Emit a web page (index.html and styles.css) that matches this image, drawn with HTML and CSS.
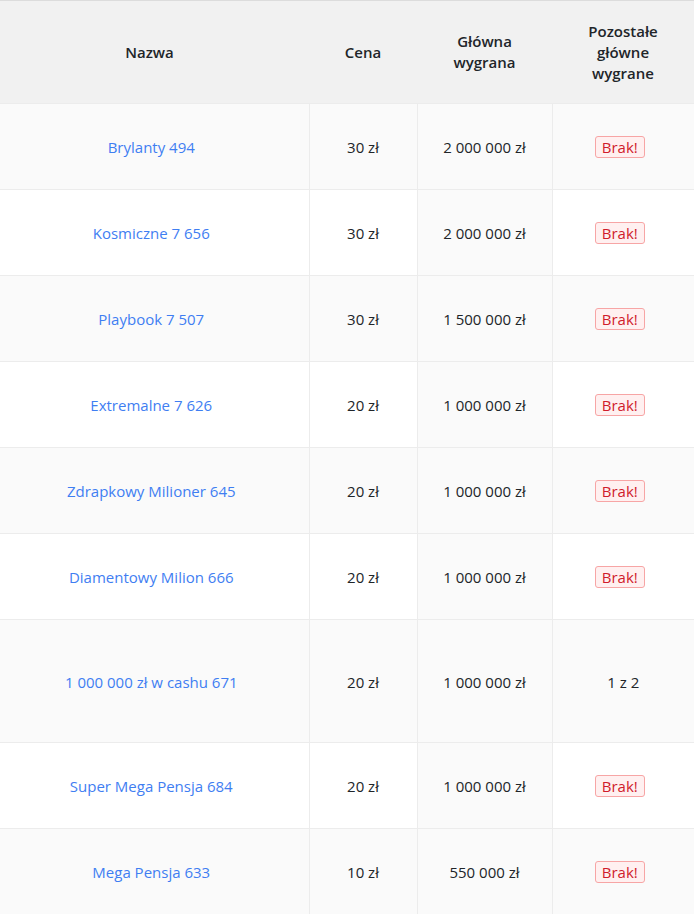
FILE: index.html
```html
<!DOCTYPE html>
<html lang="pl">
<head>
<meta charset="utf-8">
<link rel="stylesheet" href="styles.css">
</head>
<body>
<table class="tbl">
  <colgroup>
    <col class="c-name">
    <col class="c-price">
    <col class="c-prize">
    <col class="c-left">
  </colgroup>
  <thead>
    <tr>
      <th>Nazwa</th>
      <th>Cena</th>
      <th>Główna<br>wygrana</th>
      <th>Pozostałe<br>główne<br>wygrane</th>
    </tr>
  </thead>
  <tbody>
    <tr><td><a href="#">Brylanty 494</a></td><td>30 zł</td><td class="hl">2 000 000 zł</td><td><span class="badge">Brak!</span></td></tr>
    <tr><td><a href="#">Kosmiczne 7 656</a></td><td>30 zł</td><td class="hl">2 000 000 zł</td><td><span class="badge">Brak!</span></td></tr>
    <tr><td><a href="#">Playbook 7 507</a></td><td>30 zł</td><td class="hl">1 500 000 zł</td><td><span class="badge">Brak!</span></td></tr>
    <tr><td><a href="#">Extremalne 7 626</a></td><td>20 zł</td><td class="hl">1 000 000 zł</td><td><span class="badge">Brak!</span></td></tr>
    <tr><td><a href="#">Zdrapkowy Milioner 645</a></td><td>20 zł</td><td class="hl">1 000 000 zł</td><td><span class="badge">Brak!</span></td></tr>
    <tr><td><a href="#">Diamentowy Milion 666</a></td><td>20 zł</td><td class="hl">1 000 000 zł</td><td><span class="badge">Brak!</span></td></tr>
    <tr class="tall"><td><a href="#">1 000 000 zł w cashu 671</a></td><td>20 zł</td><td class="hl">1 000 000 zł</td><td>1 z 2</td></tr>
    <tr><td><a href="#">Super Mega Pensja 684</a></td><td>20 zł</td><td class="hl">1 000 000 zł</td><td><span class="badge">Brak!</span></td></tr>
    <tr><td><a href="#">Mega Pensja 633</a></td><td>10 zł</td><td class="hl">550 000 zł</td><td><span class="badge">Brak!</span></td></tr>
  </tbody>
</table>
</body>
</html>
```
FILE: styles.css
```css
html, body {
  margin: 0;
  padding: 0;
  background: #fff;
}
body {
  font-family: "Open Sans", "Noto Sans", sans-serif;
  font-size: 15px;
  color: #212529;
}
.tbl {
  width: 694px;
  border-collapse: collapse;
  table-layout: fixed;
  border-top: 1px solid #dcdcdc;
}
.c-name { width: 309px; }
.c-price { width: 108px; }
.c-prize { width: 135px; }
.c-left { width: 142px; }
.tbl th {
  background: #f1f1f1;
  height: 103px;
  padding: 0 8px;
  font-weight: 600;
  line-height: 21px;
  text-align: center;
  vertical-align: middle;
  box-sizing: border-box;
}
.tbl th:first-child { padding: 0 13px 0 3px; }
.tbl td {
  height: 86px;
  padding: 1px 8px 0;
  text-align: center;
  vertical-align: middle;
  border-top: 1px solid #ececec;
  border-left: 1px solid #ececec;
  box-sizing: border-box;
  line-height: 20px;
}
.tbl td:first-child {
  border-left: none;
  padding-left: 5px;
  padding-right: 11px;
}
.tbl tbody tr:nth-child(odd) td { background: #fafafa; }
.tbl tbody td.hl { background: #fafafa; }
.tbl tbody tr.tall td { height: 123px; }
.tbl a {
  color: #3f7ef2;
  text-decoration: none;
}
.badge {
  display: inline-block;
  padding: 0 6px;
  margin-right: 7px;
  height: 22px;
  line-height: 20px;
  box-sizing: border-box;
  border: 1px solid #f7a5a5;
  border-radius: 3px;
  background: #fff0f0;
  color: #d01c2c;
}
```
